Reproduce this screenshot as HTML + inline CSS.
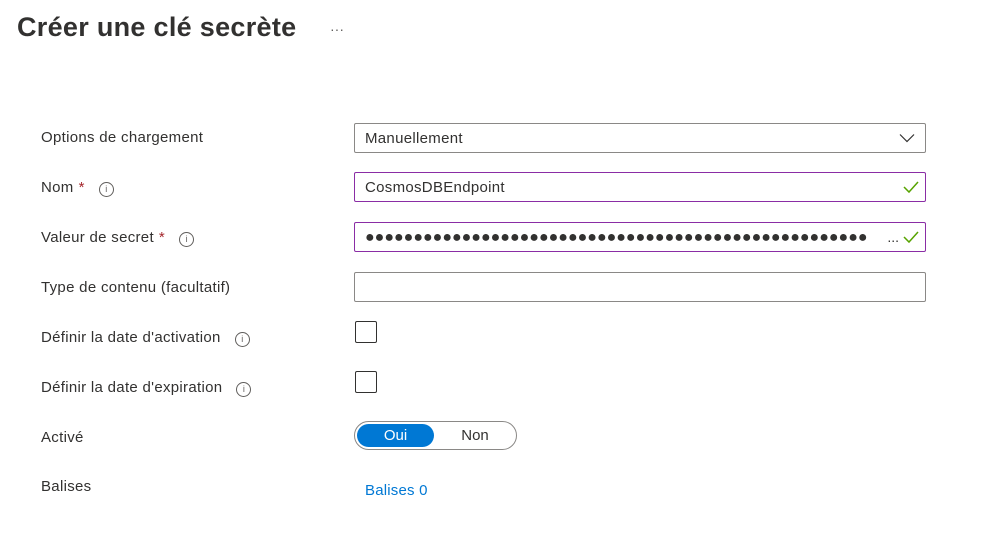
<!DOCTYPE html>
<html><head><meta charset="utf-8"><style>
body{margin:0;width:986px;height:543px;background:#fff;font-family:"Liberation Sans",sans-serif;color:#323130;position:relative;overflow:hidden}
.a{position:absolute}
.t{left:17px;top:12px;font-size:27px;font-weight:bold;letter-spacing:0.3px}
.lbl{left:41px;font-size:15px;line-height:20px;letter-spacing:0.3px}
.req{color:#a4262c;margin-left:5px}
.info{display:inline-block;width:13px;height:13px;border:1px solid #605e5c;border-radius:50%;font-size:9px;line-height:13px;text-align:center;vertical-align:0px;margin-left:14px;color:#605e5c;letter-spacing:0}
.in{left:354px;height:28px;border:1px solid #8a8886;border-radius:2px;box-sizing:content-box;font-size:15px;line-height:29px;padding-left:10px;width:560px;letter-spacing:0.3px}
.pur{border-color:#8a2da5}
.chk{position:absolute;right:6px;top:7px}
.cb{left:355px;width:20px;height:20px;border:1px solid #323130;border-radius:2px}
</style></head><body>
<div class="a t">Créer une clé secrète</div>
<div class="a" style="left:330px;top:21px;font-size:14px;color:#605e5c">···</div>

<div class="a lbl" style="top:128px">Options de chargement</div>
<div class="a in" style="top:123px">Manuellement
<svg class="a" style="right:10px;top:9px" width="16" height="10" viewBox="0 0 16 10"><path d="M1 1.5 L8 8.5 L15 1.5" fill="none" stroke="#323130" stroke-width="1.2"/></svg></div>

<div class="a lbl" style="top:178px">Nom<span class="req">*</span><span class="info">i</span></div>
<div class="a in pur" style="top:172px">CosmosDBEndpoint
<svg class="chk" width="16" height="14" viewBox="0 0 16 14"><path d="M1 7 L6 12 L15 2" fill="none" stroke="#57a300" stroke-width="1.5"/></svg></div>

<div class="a lbl" style="top:228px">Valeur de secret<span class="req">*</span><span class="info">i</span></div>
<div class="a in pur" style="top:222px;font-size:16px;letter-spacing:0;overflow:hidden;white-space:nowrap;color:#323130;line-height:29px">●●●●●●●●●●●●●●●●●●●●●●●●●●●●●●●●●●●●●●●●●●●●●●●●●●●●
<span class="a" style="right:26px;top:0;font-size:14px;background:#fff;padding-left:6px">...</span>
<svg class="chk" width="16" height="14" viewBox="0 0 16 14" style="background:#fff"><path d="M1 7 L6 12 L15 2" fill="none" stroke="#57a300" stroke-width="1.5"/></svg></div>

<div class="a lbl" style="top:278px">Type de contenu (facultatif)</div>
<div class="a in" style="top:272px"></div>

<div class="a lbl" style="top:328px">Définir la date d'activation<span class="info">i</span></div>
<div class="a cb" style="top:321px"></div>

<div class="a lbl" style="top:378px">Définir la date d'expiration<span class="info">i</span></div>
<div class="a cb" style="top:371px"></div>

<div class="a lbl" style="top:428px">Activé</div>
<div class="a" style="left:354px;top:421px;width:161px;height:27px;border:1px solid #8a8886;border-radius:15px"></div>
<div class="a" style="left:357px;top:424px;width:77px;height:23px;background:#0078d4;border-radius:12px;color:#fff;font-size:15px;line-height:24px;text-align:center">Oui</div>
<div class="a" style="left:434px;top:424px;width:82px;height:23px;font-size:15px;line-height:24px;text-align:center">Non</div>

<div class="a lbl" style="top:477px">Balises</div>
<div class="a" style="left:365px;top:481px;font-size:15px;color:#0078d4;line-height:20px;letter-spacing:0.2px">Balises 0</div>
</body></html>
